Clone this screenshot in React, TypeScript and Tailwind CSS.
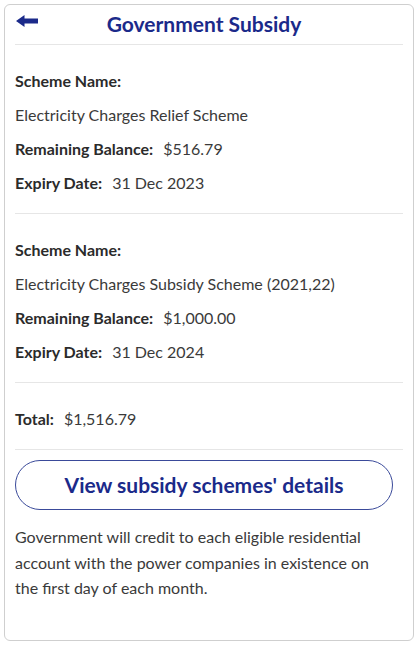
import { FC } from 'react';

interface Scheme {
  name: string;
  balance: string;
  expiry: string;
}

const schemes: Scheme[] = [
  {
    name: 'Electricity Charges Relief Scheme',
    balance: '$516.79',
    expiry: '31 Dec 2023',
  },
  {
    name: 'Electricity Charges Subsidy Scheme (2021,22)',
    balance: '$1,000.00',
    expiry: '31 Dec 2024',
  },
];

const Row: FC<{ label: string; value: string }> = ({ label, value }) => (
  <div className="h-[34px] flex items-center">
    <span className="font-bold text-[#2b2b2b]">{label}</span>
    <span className="ml-[10px] text-[#3a3a3a]">{value}</span>
  </div>
);

const SchemeBlock: FC<{ scheme: Scheme }> = ({ scheme }) => (
  <div className="pt-[19px] pb-[13px] border-b border-[#e6e6e6]">
    <div className="h-[34px] flex items-center font-bold text-[#2b2b2b]">Scheme Name:</div>
    <div className="h-[34px] flex items-center text-[#3a3a3a]">{scheme.name}</div>
    <Row label="Remaining Balance:" value={scheme.balance} />
    <Row label="Expiry Date:" value={scheme.expiry} />
  </div>
);

export default function App() {
  return (
    <div className="w-[418px] h-[647px] bg-white p-[4px] pb-[6px] font-['Lato',sans-serif] text-[16px]">
      <div className="h-full border border-[#cfcfcf] rounded-[6px] px-[10px]">
        <div className="relative h-[40px] flex items-center justify-center border-b border-[#e6e6e6]">
          <svg
            className="absolute left-[1px] top-[10px]"
            width="22"
            height="12"
            viewBox="0 0 22 12"
          >
            <path d="M0 6 L8.5 0 L8.5 3.5 L22 3.5 L22 8.5 L8.5 8.5 L8.5 12 Z" fill="#1b2a8a" />
          </svg>
          <h1 className="text-[21px] font-bold text-[#1b2a8a] -mt-[2px] mr-[10px]">Government Subsidy</h1>
        </div>
        {schemes.map((s) => (
          <SchemeBlock key={s.name} scheme={s} />
        ))}
        <div className="pt-[19px] pb-[13px] border-b border-[#e6e6e6]">
          <Row label="Total:" value="$1,516.79" />
        </div>
        <button className="mt-[10px] w-[378px] h-[50px] rounded-full border-[1.5px] border-[#3a4a9a] text-[21px] font-bold text-[#1b2a8a] flex items-center justify-center">
          View subsidy schemes' details
        </button>
        <p className="mt-[14px] leading-[25.5px] text-[#3a3a3a] pr-[14px]">
          Government will credit to each eligible residential account with the power companies in existence on the first day of each month.
        </p>
      </div>
    </div>
  );
}
